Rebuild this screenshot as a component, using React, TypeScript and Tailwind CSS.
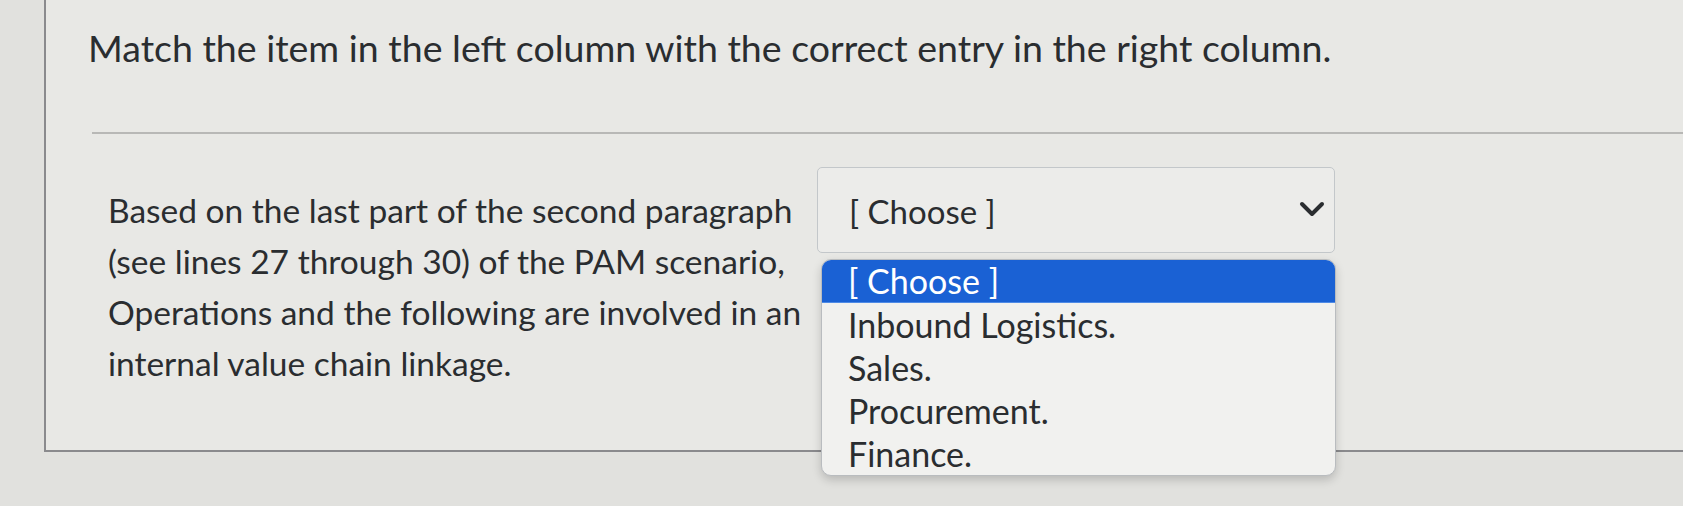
const options = ["[ Choose ]", "Inbound Logistics.", "Sales.", "Procurement.", "Finance."];

export default function App() {
  return (
    <div className="h-[506px] overflow-hidden bg-[#e1e1de] font-['Lato',sans-serif] text-[#2a2d30]">
      <div className="ml-[44px] h-[452px] border-l-2 border-b-2 border-[#8a8a8d] bg-[#e8e8e5]">
        <h1 className="pl-[42px] pt-[26px] text-[37.5px] leading-[44px]">
          Match the item in the left column with the correct entry in the right column.
        </h1>

        <div className="ml-[46px] mt-[62px] h-[2px] bg-[#b8b8b6]" />

        <div className="flex pl-[62px] pt-[30px]">
          <p className="w-[700px] pt-[21px] text-[33.5px] leading-[51px]">
            Based on the last part of the second paragraph (see lines 27 through 30) of the PAM scenario, Operations and
            the following are involved in an internal value chain linkage.
          </p>

          <div className="relative ml-[9px] w-[518px] pt-[3px]">
            <div className="flex h-[86px] items-center justify-between rounded-[5px] border border-[#c3c7ca] bg-[#ececea] pl-[31px] pr-[9px]">
              <span className="pt-[4px] text-[33px]">[ Choose ]</span>
              <svg width="26" height="16" viewBox="0 0 26 16" fill="none" className="mt-[-2px]">
                <path d="M3 3l10 10 10-10" stroke="#2a2d30" strokeWidth="4" strokeLinecap="round" strokeLinejoin="round" />
              </svg>
            </div>

            <div className="absolute left-[4px] right-[-1px] top-[95px] overflow-hidden rounded-[10px] border border-[#b9bcbf] bg-[#f1f1ef] shadow-[0_4px_10px_rgba(0,0,0,0.18)]">
              {options.map((o, i) => (
                <div
                  key={o}
                  className={
                    i === 0
                      ? "h-[43px] border-b border-[#4f8be6] bg-[#1a61d4] pl-[26px] text-[34px] leading-[42px] text-white"
                      : "h-[43px] pl-[26px] text-[34px] leading-[43px]"
                  }
                >
                  {o}
                </div>
              ))}
            </div>
          </div>
        </div>
      </div>
    </div>
  );
}
